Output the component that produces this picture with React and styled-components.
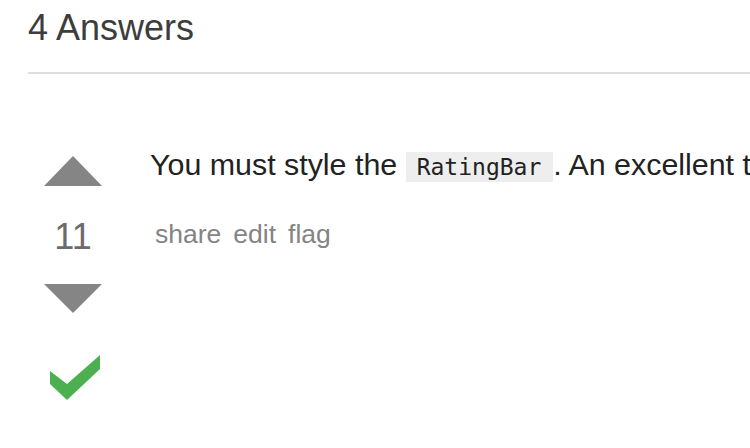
import React from "react";
import styled, { createGlobalStyle } from "styled-components";

const Global = createGlobalStyle`
  html, body { margin: 0; padding: 0; background: #fff; }
  body {
    font-family: "Liberation Sans", Arial, Helvetica, sans-serif;
    width: 750px;
    height: 448px;
    overflow: hidden;
  }
`;

const Page = styled.div`
  padding: 7px 0 0 28px;
  overflow: hidden;
`;

const Heading = styled.h2`
  margin: 0;
  font-size: 36px;
  line-height: 42px;
  font-weight: 400;
  color: #3d3d3d;
`;

const Divider = styled.hr`
  margin: 23px 0 0 0;
  border: 0;
  height: 2px;
  background: #dedede;
`;

const AnswerRow = styled.div`
  display: flex;
  align-items: flex-start;
  gap: 32px;
  padding-top: 71px;
`;

const VoteCell = styled.div`
  width: 90px;
  flex: none;
  display: flex;
  flex-direction: column;
  align-items: center;
  margin-top: 11px;
`;

const Arrow = styled.svg`
  display: block;
  width: 58px;
  height: 30px;
  margin-top: ${(p) => p.$mt || 0}px;
`;

const VoteCount = styled.div`
  margin-top: 33px;
  font-size: 36px;
  line-height: 36px;
  color: #6b6b6b;
`;

const Check = styled.svg`
  display: block;
  width: 50px;
  height: 45px;
  margin-top: 41px;
  margin-left: 4px;
`;

const PostBody = styled.div`
  flex: 1;
  min-width: 0;
  overflow: hidden;
`;

const Text = styled.p`
  margin: 0;
  font-size: 30.4px;
  line-height: 39px;
  color: #222;
  white-space: nowrap;
`;

const Code = styled.code`
  font-family: "DejaVu Sans Mono", "Liberation Mono", monospace;
  font-size: 23px;
  background: #eeeeee;
  padding: 2px 12px 2px 11px;
  color: #222;
`;

const Menu = styled.div`
  display: flex;
  gap: 12px;
  margin-top: 30px;
  padding-left: 5px;
`;

const MenuLink = styled.a`
  font-size: 26.5px;
  line-height: 34px;
  color: #848484;
  text-decoration: none;
`;

export default function App() {
  return (
    <>
      <Global />
      <Page>
        <Heading>4 Answers</Heading>
        <Divider />
        <AnswerRow>
          <VoteCell>
            <Arrow viewBox="0 0 58 30">
              <polygon points="29,0 58,30 0,30" fill="#858585" />
            </Arrow>
            <VoteCount>11</VoteCount>
            <Arrow viewBox="0 0 58 30" $mt={29}>
              <polygon points="0,0 58,0 29,29" fill="#858585" />
            </Arrow>
            <Check viewBox="0 0 50 45">
              <polygon points="0,16 17,29 50,0 50,14 17,45 0,29" fill="#4caf50" />
            </Check>
          </VoteCell>
          <PostBody>
            <Text>
              You must style the <Code>RatingBar</Code>. An excellent tutorial is available here.
            </Text>
            <Menu>
              <MenuLink href="#">share</MenuLink>
              <MenuLink href="#">edit</MenuLink>
              <MenuLink href="#">flag</MenuLink>
            </Menu>
          </PostBody>
        </AnswerRow>
      </Page>
    </>
  );
}
